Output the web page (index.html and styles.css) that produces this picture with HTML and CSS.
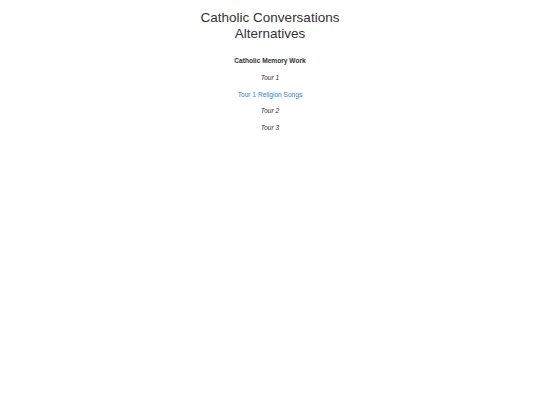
FILE: index.html
```html
<!DOCTYPE html>
<html lang="en">
<head>
    <meta charset="UTF-8">
    <title>Catholic Conversations Alternatives</title>
    <link rel="stylesheet" href="styles.css">
</head>
<body>
    <h1>Catholic Conversations<br>Alternatives</h1>
    <ul class="links">
        <li class="heading">Catholic Memory Work</li>
        <li class="tour">Tour 1</li>
        <li><a href="#">Tour 1 Religion Songs</a></li>
        <li class="tour">Tour 2</li>
        <li class="tour">Tour 3</li>
    </ul>
</body>
</html>
```

FILE: styles.css
```css
body {
    margin: 0;
    padding-top: 10px;
    font-family: "Liberation Sans", Arial, sans-serif;
    color: #333;
    background-color: #fff;
    text-align: center;
}
h1 {
    font-size: 13.5px;
    font-weight: normal;
    line-height: 16px;
    margin: 0 0 11px 0;
    color: #333;
}
.links {
    list-style: none;
    margin: 0;
    padding: 0;
    font-size: 6.6px;
}
.links li {
    line-height: 16.75px;
}
.heading {
    font-weight: bold;
}
.tour {
    font-style: italic;
}
.links a {
    color: #2a85d8;
    text-decoration: none;
}
```
